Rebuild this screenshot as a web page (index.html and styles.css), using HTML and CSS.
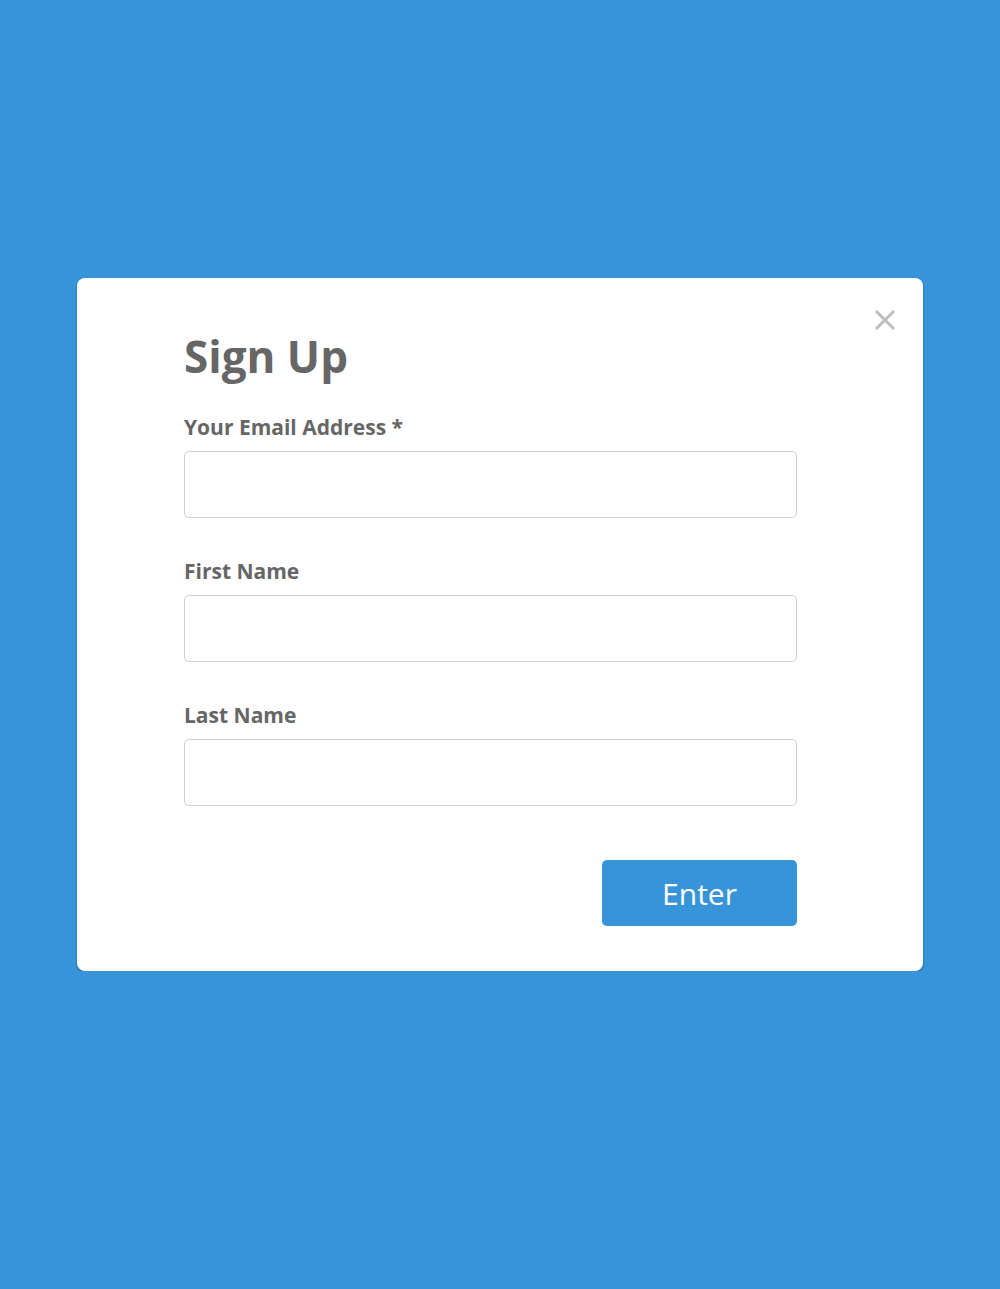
FILE: index.html
```html
<!DOCTYPE html>
<html lang="en">
<head>
    <meta charset="UTF-8" />
    <title>Sign Up</title>
    <link rel="stylesheet" href="styles.css">
</head>
<body>
<div class="modal">
    <button class="close" type="button" aria-label="Close">
        <svg width="22" height="22" viewBox="0 0 22 22">
            <path d="M2 2 L20 20 M20 2 L2 20" stroke="#bdbdbd" stroke-width="3" fill="none"/>
        </svg>
    </button>
    <h1>Sign Up</h1>
    <form class="signup-form">
        <div class="field-group">
            <label>Your Email Address *</label>
            <input type="email" name="email">
        </div>
        <div class="field-group">
            <label>First Name</label>
            <input type="text" name="first_name">
        </div>
        <div class="field-group">
            <label>Last Name</label>
            <input type="text" name="last_name">
        </div>
        <div class="actions">
            <button type="submit">Enter</button>
        </div>
    </form>
</div>
</body>
</html>
```

FILE: styles.css
```css
body {
    margin: 0;
    font-family: 'Open Sans', 'Liberation Sans', sans-serif;
    background-color: #3894d8;
    color: #666;
}

.modal {
    position: relative;
    box-sizing: border-box;
    width: 846px;
    margin: 278px 0 0 77px;
    padding: 50px 126px 45px 107px;
    background-color: white;
    border-radius: 8px;
    box-shadow: 0 2px 3px rgba(0,0,0,0.3);
}

.close {
    position: absolute;
    right: 27px;
    top: 31px;
    padding: 0;
    border: none;
    background: none;
    cursor: pointer;
}

h1 {
    margin: 0 0 28px 0;
    font-size: 44px;
    line-height: 56px;
    font-weight: bold;
    color: #666;
}

.field-group {
    display: flex;
    flex-direction: column;
    margin-bottom: 38px;
}

.field-group label {
    font-size: 21px;
    font-weight: bold;
    line-height: 30px;
    margin-bottom: 9px;
}

.field-group input {
    height: 67px;
    box-sizing: border-box;
    border: 1px solid #cfcfcf;
    border-radius: 5px;
    font-size: 18px;
    padding: 0 15px;
}

.actions {
    display: flex;
    justify-content: flex-end;
    margin-top: 54px;
}

button[type="submit"] {
    width: 195px;
    height: 66px;
    background-color: #3894d8;
    color: white;
    border: none;
    border-radius: 5px;
    font-family: 'Open Sans', 'Liberation Sans', sans-serif;
    font-size: 30px;
    cursor: pointer;
}
```
